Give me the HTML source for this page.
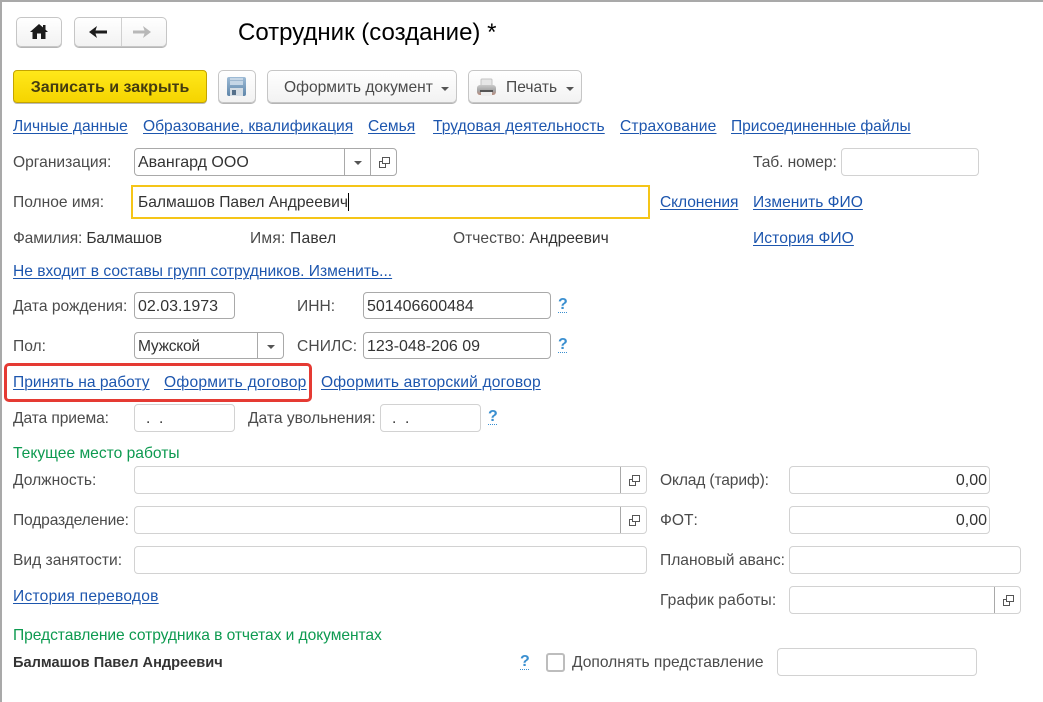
<!DOCTYPE html>
<html><head><meta charset="utf-8"><style>
html,body{margin:0;padding:0}
body{width:1043px;height:702px;position:relative;overflow:hidden;background:#fff;font-family:"Liberation Sans",sans-serif;font-size:15.6px;color:#4b4b4b}
body>*{position:absolute;box-sizing:border-box}
.t{line-height:22px;height:20px;white-space:nowrap}
.v{color:#333}
a{color:#1d56ae;text-decoration:underline;text-underline-offset:2px;text-decoration-thickness:1px}
.l{line-height:22px;height:20px;white-space:nowrap}
.g{color:#0d9a50}
.f{border:1px solid #d2d2d2;border-radius:4px;background:#fff;padding-left:3px;color:#333;white-space:nowrap}
.f.d{border-color:#a9a9a9}
.r{text-align:right;padding-right:2px;padding-left:0;font-size:16px}
.n{font-size:16px}
.q{color:#3a8fd0;font-weight:bold;font-size:16px;line-height:20px;height:20px;text-decoration:underline dotted 1px;text-underline-offset:3px}
.b{border:1px solid #c6c6c6;border-radius:5px;background:linear-gradient(#fff,#f2f2f2);box-shadow:0 1px 0 #b5b5b5;color:#4b4b4b;line-height:33px;white-space:nowrap}
.s{border-left:1px solid #a9a9a9}
.tri{width:0;height:0;border-left:4px solid transparent;border-right:4px solid transparent;border-top:4px solid #555}
</style></head><body>
<div style="left:0;top:0;width:1043px;height:2px;background:#a9a9a9"></div>
<div style="left:0;top:0;width:2px;height:702px;background:#a9a9a9"></div>

<div class="b" style="left:16px;top:17px;width:46px;height:30px"></div>
<svg style="left:30px;top:24px" width="18" height="15" viewBox="0 0 18 15"><path d="M9 0 L13 3.4 V1 H15.5 V5.6 L18 8 H15.5 V15 H11 V9.5 H7 V15 H2.5 V8 H0 Z" fill="#1c1c1c"/></svg>
<div class="b" style="left:74px;top:17px;width:93px;height:30px"></div>
<div style="left:121px;top:18px;width:1px;height:28px;background:#d0d0d0"></div>
<svg style="left:89px;top:26px" width="18" height="12" viewBox="0 0 18 12"><path d="M0 6 L8 0 L6.5 4.5 H18 V7.5 H6.5 L8 12 Z" fill="#1c1c1c"/></svg>
<svg style="left:133px;top:26px" width="18" height="12" viewBox="0 0 18 12"><path d="M18 6 L10 0 L11.500 4.500 H0 V7.500 H11.500 L10 12 Z" fill="#b8b8b8"/></svg>
<div class="t" style="left:238px;top:19px;font-size:24px;line-height:28px;height:28px;color:#000">Сотрудник (создание) *</div>

<div style="left:13px;top:70px;width:194px;height:33px;border:1px solid #c4a400;border-radius:4px;background:linear-gradient(#ffe81a,#f5d400);box-shadow:0 1px 0 #bbb;text-align:center;line-height:33px;font-size:16px;font-weight:bold;color:#443c10">Записать и закрыть</div>
<div class="b" style="left:218px;top:70px;width:38px;height:33px"></div>
<svg style="left:227px;top:77px" width="19" height="19" viewBox="0 0 19 19"><defs><linearGradient id="sv" x1="0" y1="0" x2="0" y2="1"><stop offset="0" stop-color="#9dbbd6"/><stop offset="1" stop-color="#5f86aa"/></linearGradient></defs><rect width="19" height="19" rx="2" fill="url(#sv)"/><rect x="3" y="1" width="13" height="7" fill="#c5d6e6"/><rect x="3" y="3" width="13" height="1" fill="#9fb8cf"/><rect x="3" y="11" width="13" height="8" fill="#d5dde4"/><rect x="5" y="13" width="4" height="5" fill="#55708a"/></svg>
<div class="b" style="left:267px;top:70px;width:190px;height:33px;padding-left:16px">Оформить документ</div>
<div class="tri" style="left:441px;top:87px"></div>
<div class="b" style="left:468px;top:70px;width:114px;height:33px;padding-left:37px">Печать</div>
<svg style="left:477px;top:78px" width="19" height="19" viewBox="0 0 19 19"><defs><linearGradient id="pr" x1="0" y1="0" x2="0" y2="1"><stop offset="0" stop-color="#c9c9c9"/><stop offset=".55" stop-color="#a5a5a5"/><stop offset="1" stop-color="#b98b7c"/></linearGradient></defs><rect x="4" y="1" width="11" height="7" rx="1" fill="#e6e6e6" stroke="#c4c4c4"/><rect x="0" y="7" width="19" height="10" rx="3" fill="url(#pr)"/><rect x="3" y="12" width="13" height="2" fill="#555"/><rect x="4" y="14" width="11" height="4" fill="#eee"/></svg>
<div class="tri" style="left:566px;top:87px"></div>

<a class="l" style="left:13px;top:116px">Личные данные</a>
<a class="l" style="left:143px;top:116px">Образование, квалификация</a>
<a class="l" style="left:368px;top:116px">Семья</a>
<a class="l" style="left:433px;top:116px;letter-spacing:.05px">Трудовая деятельность</a>
<a class="l" style="left:620px;top:116px;letter-spacing:.15px">Страхование</a>
<a class="l" style="left:731px;top:116px;letter-spacing:-.05px">Присоединенные файлы</a>

<div class="t" style="left:13px;top:152px">Организация:</div>
<div class="f d n" style="left:134px;top:148px;width:263px;height:28px;line-height:28px">Авангард ООО</div>
<div class="s" style="left:344px;top:149px;width:1px;height:26px"></div>
<div class="s" style="left:370px;top:149px;width:1px;height:26px"></div>
<div class="tri" style="left:354px;top:161px"></div>
<svg style="left:379px;top:157px" width="11" height="11" viewBox="0 0 11 11" fill="none" stroke="#555"><path d="M3.5 .5h7v6h-7zM3.5 4.5h-3v6h6v-4"/></svg>
<div class="t" style="left:753px;top:152px;letter-spacing:-.1px">Таб. номер:</div>
<div class="f" style="left:841px;top:148px;width:138px;height:28px"></div>

<div class="t" style="left:13px;top:192px">Полное имя:</div>
<div style="left:131px;top:185px;width:519px;height:34px;border:2px solid #f5c518;padding-left:5px;line-height:32px;color:#333">Балмашов Павел Андреевич</div>
<div style="left:348px;top:193px;width:1px;height:18px;background:#000"></div>
<a class="l" style="left:660px;top:192px;letter-spacing:-.1px">Склонения</a>
<a class="l" style="left:753px;top:192px">Изменить ФИО</a>

<div class="t" style="left:13px;top:228px;letter-spacing:-.17px">Фамилия: <span class="v">Балмашов</span></div>
<div class="t" style="left:250px;top:228px;letter-spacing:.2px">Имя: <span class="v">Павел</span></div>
<div class="t" style="left:453px;top:228px">Отчество: <span class="v">Андреевич</span></div>
<a class="l" style="left:753px;top:228px;letter-spacing:.08px">История ФИО</a>
<a class="l" style="left:13px;top:261px">Не входит в составы групп сотрудников. Изменить...</a>

<div class="t" style="left:13px;top:296px">Дата рождения:</div>
<div class="f d n" style="left:134px;top:292px;width:101px;height:27px;line-height:27px">02.03.1973</div>
<div class="t" style="left:297px;top:296px">ИНН:</div>
<div class="f d n" style="left:363px;top:292px;width:188px;height:27px;line-height:27px">501406600484</div>
<a class="q" style="left:558px;top:295px">?</a>

<div class="t" style="left:13px;top:336px">Пол:</div>
<div class="f d" style="left:134px;top:332px;width:150px;height:27px;line-height:27px;letter-spacing:-.28px">Мужской</div>
<div class="s" style="left:257px;top:333px;width:1px;height:25px"></div>
<div class="tri" style="left:267px;top:345px"></div>
<div class="t" style="left:297px;top:336px;letter-spacing:.1px">СНИЛС:</div>
<div class="f d n" style="left:363px;top:332px;width:188px;height:27px;line-height:27px">123-048-206 09</div>
<a class="q" style="left:558px;top:335px">?</a>

<div style="left:4px;top:363px;width:308px;height:39px;border:3px solid #e53a33;border-radius:5px"></div>
<a class="l" style="left:13px;top:372px">Принять на работу</a>
<a class="l" style="left:164px;top:372px;letter-spacing:.25px">Оформить договор</a>
<a class="l" style="left:321px;top:372px;letter-spacing:.15px">Оформить авторский договор</a>

<div class="t" style="left:13px;top:408px;letter-spacing:-.1px">Дата приема:</div>
<div class="f" style="left:134px;top:404px;width:101px;height:28px;line-height:28px;padding-left:11px">. &nbsp;.</div>
<div class="t" style="left:248px;top:408px">Дата увольнения:</div>
<div class="f" style="left:380px;top:404px;width:101px;height:28px;line-height:28px;padding-left:11px">. &nbsp;.</div>
<a class="q" style="left:488px;top:407px">?</a>

<div class="t g" style="left:13px;top:443px">Текущее место работы</div>

<div class="t" style="left:13px;top:470px">Должность:</div>
<div class="f" style="left:134px;top:466px;width:513px;height:28px"></div>
<div class="s" style="left:620px;top:467px;width:1px;height:26px"></div>
<svg style="left:629px;top:475px" width="11" height="11" viewBox="0 0 11 11" fill="none" stroke="#555"><path d="M3.5 .5h7v6h-7zM3.5 4.5h-3v6h6v-4"/></svg>
<div class="t" style="left:660px;top:470px;letter-spacing:-.15px">Оклад (тариф):</div>
<div class="f r" style="left:789px;top:466px;width:201px;height:28px;line-height:28px">0,00</div>

<div class="t" style="left:13px;top:510px;letter-spacing:-.15px">Подразделение:</div>
<div class="f" style="left:134px;top:506px;width:513px;height:28px"></div>
<div class="s" style="left:620px;top:507px;width:1px;height:26px"></div>
<svg style="left:629px;top:515px" width="11" height="11" viewBox="0 0 11 11" fill="none" stroke="#555"><path d="M3.5 .5h7v6h-7zM3.5 4.5h-3v6h6v-4"/></svg>
<div class="t" style="left:660px;top:510px">ФОТ:</div>
<div class="f r" style="left:789px;top:506px;width:201px;height:28px;line-height:28px">0,00</div>

<div class="t" style="left:13px;top:550px">Вид занятости:</div>
<div class="f" style="left:134px;top:546px;width:513px;height:28px"></div>
<div class="t" style="left:660px;top:550px">Плановый аванс:</div>
<div class="f" style="left:789px;top:546px;width:232px;height:28px"></div>

<a class="l" style="left:13px;top:586px;letter-spacing:.23px">История переводов</a>
<div class="t" style="left:660px;top:590px;letter-spacing:.1px">График работы:</div>
<div class="f" style="left:789px;top:586px;width:232px;height:28px"></div>
<div class="s" style="left:994px;top:587px;width:1px;height:26px"></div>
<svg style="left:1003px;top:595px" width="11" height="11" viewBox="0 0 11 11" fill="none" stroke="#555"><path d="M3.5 .5h7v6h-7zM3.5 4.5h-3v6h6v-4"/></svg>

<div class="t g" style="left:13px;top:625px;letter-spacing:-.06px">Представление сотрудника в отчетах и документах</div>
<div class="t" style="left:13px;top:652px;font-size:14.6px;font-weight:bold;color:#333">Балмашов Павел Андреевич</div>
<a class="q" style="left:520px;top:652px">?</a>
<div style="left:546px;top:653px;width:19px;height:19px;border:2px solid #bdbdbd;border-radius:3px"></div>
<div class="t" style="left:572px;top:652px">Дополнять представление</div>
<div class="f" style="left:777px;top:648px;width:200px;height:28px"></div>
</body></html>
